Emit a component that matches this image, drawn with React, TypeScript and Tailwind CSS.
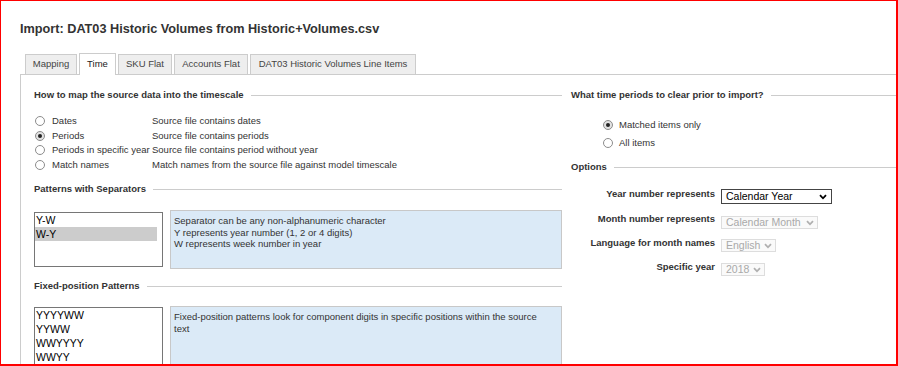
import React from "react";

const tabs = [
  { label: "Mapping", w: "w-[52px]" },
  { label: "Time", w: "w-[37px]", active: true },
  { label: "SKU Flat", w: "w-[54px]" },
  { label: "Accounts Flat", w: "w-[74px]" },
  { label: "DAT03 Historic Volumes Line Items", w: "w-[166px]" },
];

const mapOptions = [
  { label: "Dates", desc: "Source file contains dates" },
  { label: "Periods", desc: "Source file contains periods", checked: true },
  { label: "Periods in specific year", desc: "Source file contains period without year" },
  { label: "Match names", desc: "Match names from the source file against model timescale" },
];

function Radio({ checked }: { checked?: boolean }) {
  return (
    <span
      className={`flex h-[10px] w-[10px] shrink-0 items-center justify-center rounded-full border border-[#8c8c8c] ${
        checked ? "bg-[#e2e2e2]" : "bg-white"
      }`}
    >
      {checked && <span className="h-[4px] w-[4px] rounded-full bg-[#222222]" />}
    </span>
  );
}

function Heading({ children }: { children: React.ReactNode }) {
  return (
    <div className="flex h-[12px] items-center gap-[7px]">
      <span className="whitespace-nowrap text-[9.5px] font-bold leading-[12px] text-[#333333]">{children}</span>
      <span className="h-px flex-1 bg-[#cccccc]" />
    </div>
  );
}

function Chevron({ color }: { color: string }) {
  return (
    <svg width="8" height="6" viewBox="0 0 8 6" className="shrink-0">
      <path d="M1 1.2 L4 4.3 L7 1.2" fill="none" stroke={color} strokeWidth="1.8" />
    </svg>
  );
}

function Select({ value, w, disabled }: { value: string; w: string; disabled?: boolean }) {
  if (!disabled) {
    return (
      <div className={`flex h-[15px] ${w} items-center justify-between border border-[#444444] bg-white pl-[4px] pr-[4px] text-[10.5px] leading-[13px] text-black`}>
        <span>{value}</span>
        <Chevron color="#000000" />
      </div>
    );
  }
  return (
    <div className={`flex h-[13px] ${w} items-center justify-between border border-[#dddddd] bg-[#fafafa] pl-[4px] pr-[3px] text-[10.5px] leading-[11px] text-[#a9a9a9]`}>
      <span className="whitespace-nowrap">{value}</span>
      <Chevron color="#b0b0b0" />
    </div>
  );
}

export default function App() {
  return (
    <div className="h-[366px] w-[898px] overflow-hidden border-t border-l border-r-2 border-b-2 border-[#ff0000] bg-white font-['Liberation_Sans',Arial,sans-serif] text-[#333333]">
      <div className="pl-[19px] pt-[20px]">
        <h1 className="h-[16px] whitespace-nowrap text-[12.7px] font-bold leading-[16px] text-[#333333]">
          Import: DAT03 Historic Volumes from Historic+Volumes.csv
        </h1>

        {/* tabs */}
        <div className="mt-[16px] flex h-[21px] items-end gap-[2px] pl-[5px]">
          {tabs.map((t) =>
            t.active ? (
              <div
                key={t.label}
                className={`relative z-10 -mb-px flex h-[22px] ${t.w} items-center justify-center border border-b-0 border-[#cccccc] bg-white text-[9.5px] text-[#222222]`}
              >
                {t.label}
              </div>
            ) : (
              <div
                key={t.label}
                className={`flex h-[20px] ${t.w} items-center justify-center whitespace-nowrap border border-b-0 border-[#cccccc] bg-[#eeeeee] text-[9.5px] text-[#444444]`}
              >
                {t.label}
              </div>
            )
          )}
        </div>

        {/* panel */}
        <div className="flex w-[1000px] border-t border-l border-[#cccccc] pl-[13px] pt-[14px]">
          {/* left column */}
          <div className="w-[528px] shrink-0">
            <Heading>How to map the source data into the timescale</Heading>
            <div className="mt-[13px]">
              {mapOptions.map((o) => (
                <div key={o.label} className="flex h-[14.5px] items-center text-[9.5px] leading-[12px]">
                  <span className="ml-[1px] mr-[7px]">
                    <Radio checked={o.checked} />
                  </span>
                  <span className="w-[100px] shrink-0 whitespace-nowrap">{o.label}</span>
                  <span className="whitespace-nowrap">{o.desc}</span>
                </div>
              ))}
            </div>

            <div className="mt-[11px]">
              <Heading>Patterns with Separators</Heading>
            </div>
            <div className="mt-[15px] flex items-start">
              <div className="mt-[2px] h-[55px] w-[129px] shrink-0 border border-[#767676] bg-white pr-[5px] text-[10.5px] leading-[14px] text-black">
                <div className="pl-[1px]">Y-W</div>
                <div className="bg-[#cccccc] pl-[1px]">W-Y</div>
              </div>
              <div className="ml-[7px] h-[59px] w-[392px] border border-[#c8c8c8] bg-[#dbeaf7] pl-[3px] pt-[4px] text-[9.5px] leading-[11.5px] text-[#333333]">
                <div>Separator can be any non-alphanumeric character</div>
                <div>Y represents year number (1, 2 or 4 digits)</div>
                <div>W represents week number in year</div>
              </div>
            </div>

            <div className="mt-[11px]">
              <Heading>Fixed-position Patterns</Heading>
            </div>
            <div className="mt-[14px] flex items-start">
              <div className="mt-[1px] h-[58px] w-[129px] shrink-0 border border-[#767676] bg-white pr-[5px] text-[10.5px] leading-[14px] text-black">
                <div className="pl-[1px]">YYYYWW</div>
                <div className="pl-[1px]">YYWW</div>
                <div className="pl-[1px]">WWYYYY</div>
                <div className="pl-[1px]">WWYY</div>
              </div>
              <div className="ml-[7px] h-[60px] w-[392px] border border-[#c8c8c8] bg-[#dbeaf7] pl-[3px] pt-[4px] text-[9.5px] leading-[12px] text-[#333333]">
                Fixed-position patterns look for component digits in specific positions within the source
                <br />
                text
              </div>
            </div>
          </div>

          {/* right column */}
          <div className="ml-[9px] flex-1">
            <Heading>What time periods to clear prior to import?</Heading>
            <div className="mt-[15px] pl-[32px]">
              {[
                { label: "Matched items only", checked: true },
                { label: "All items" },
              ].map((o) => (
                <div key={o.label} className="flex h-[18px] items-center gap-[6px] text-[9.5px] leading-[12px]">
                  <Radio checked={o.checked} />
                  <span>{o.label}</span>
                </div>
              ))}
            </div>

            <div className="mt-[9px]">
              <Heading>Options</Heading>
            </div>

            <div className="mt-[16px] flex items-start">
              <span className="-mt-[1px] w-[144px] shrink-0 text-right text-[9.5px] font-bold leading-[12px]">Year number represents</span>
              <span className="ml-[6px]">
                <Select value="Calendar Year" w="w-[111px]" />
              </span>
            </div>
            <div className="mt-[12px] flex items-start">
              <span className="-mt-[3px] w-[144px] shrink-0 text-right text-[9.5px] font-bold leading-[12px]">Month number represents</span>
              <span className="ml-[6px]">
                <Select value="Calendar Month" w="w-[97px]" disabled />
              </span>
            </div>
            <div className="mt-[10px] flex items-start">
              <span className="-mt-[2px] w-[144px] shrink-0 text-right text-[9.5px] font-bold leading-[12px]">Language for month names</span>
              <span className="ml-[6px]">
                <Select value="English" w="w-[55px]" disabled />
              </span>
            </div>
            <div className="mt-[11px] flex items-start">
              <span className="-mt-[2px] w-[144px] shrink-0 text-right text-[9.5px] font-bold leading-[12px]">Specific year</span>
              <span className="ml-[6px]">
                <Select value="2018" w="w-[44px]" disabled />
              </span>
            </div>
          </div>
        </div>
      </div>
    </div>
  );
}
